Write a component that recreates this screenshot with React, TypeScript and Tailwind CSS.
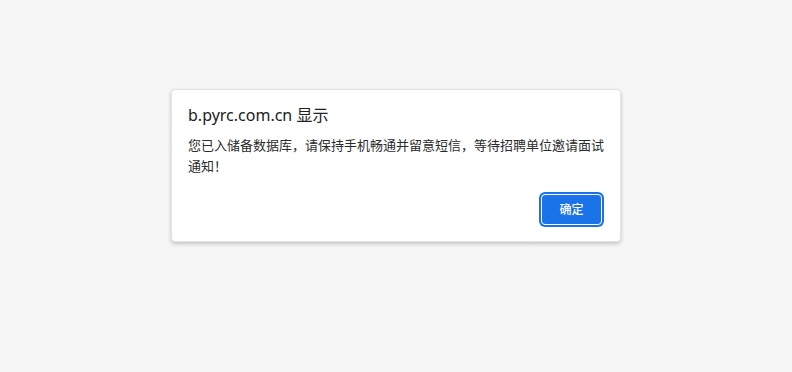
import React from 'react';

export default function App() {
  return (
    <div
      className="min-h-[372px] w-full bg-[#f6f6f6] flex justify-center pt-[89px]"
      style={{ fontFamily: '"Noto Sans", "Noto Sans CJK SC", sans-serif' }}
    >
      <div className="w-[450px] h-[153px] bg-white rounded-[4px] border border-[#e3e3e3] shadow-[0_2px_4px_rgba(0,0,0,0.2)] flex flex-col px-[16px] pt-[14px] pb-[16px]">
        <div className="text-[16px] leading-[22px] text-[#202124]">b.pyrc.com.cn 显示</div>
        <p className="mt-[9px] text-[13px] leading-[21px] text-[#2b2b2b]">
          您已入储备数据库，请保持手机畅通并留意短信，等待招聘单位邀请面试通知！
        </p>
        <div className="mt-auto flex justify-end pr-[2px]">
          <button className="w-[61px] h-[31px] rounded-[4px] bg-[#1a73e8] border border-white ring-2 ring-[#1a73e8] text-white text-[12px] font-medium">
            确定
          </button>
        </div>
      </div>
    </div>
  );
}
